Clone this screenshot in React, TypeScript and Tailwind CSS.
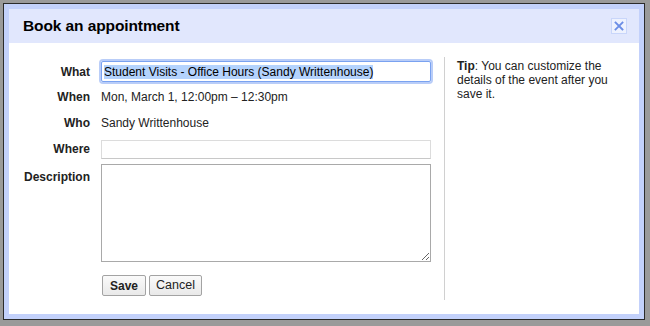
import { useEffect, useRef } from 'react';

const CloseIcon = () => (
  <svg width="10" height="10" viewBox="0 0 10 10">
    <path d="M1.5 1.5 L8.5 8.5 M8.5 1.5 L1.5 8.5" stroke="#6b8de6" strokeWidth="1.8" strokeLinecap="square" />
  </svg>
);

const Label = ({ children, top }: { children: string; top?: boolean }) => (
  <div className={`w-[81px] shrink-0 text-right text-[12px] font-bold text-[#222] ${top ? 'self-start pt-[4px]' : ''}`}>
    {children}
  </div>
);

export default function App() {
  const whatRef = useRef<HTMLInputElement>(null);

  useEffect(() => {
    // the title field opens focused with its text selected
    whatRef.current?.focus();
    whatRef.current?.select();
  }, []);

  return (
    <div
      className="w-[650px] h-[326px] bg-[#9a9a9a] pt-[3px] pl-[3px] pr-[5px] pb-[6px]"
      style={{ fontFamily: '"Liberation Sans", Arial, sans-serif' }}
    >
      <div className="h-full border border-[#2b2b2b] bg-[#c3d1fb] p-[5px]">
        <div className="h-full flex flex-col bg-white">
          {/* Header */}
          <div className="h-[34px] shrink-0 bg-[#e1e7fd] flex items-center justify-between pl-[14px] pr-[12px]">
            <h1 className="text-[15.5px] font-bold text-black tracking-[-0.1px]">Book an appointment</h1>
            <button className="w-[16px] h-[16px] border border-[#c9d6fa] bg-[#eef2fe] flex items-center justify-center">
              <CloseIcon />
            </button>
          </div>

          {/* Body */}
          <div className="flex-1 flex py-[14px]">
            <div className="w-[422px] shrink-0 flex flex-col pt-[2px] text-[12px] text-[#222]">
              <div className="h-[25px] flex items-center gap-[11px]">
                <Label>What</Label>
                <input
                  ref={whatRef}
                  defaultValue="Student Visits - Office Hours (Sandy Writtenhouse)"
                  className="w-[330px] h-[21px] border border-[#7aa2f0] rounded-[2px] px-[2px] text-[12px] text-black outline-none shadow-[0_0_0_2px_#b9cdf8] selection:bg-[#b4d3fd]"
                />
              </div>
              <div className="h-[26px] flex items-center gap-[11px]">
                <Label>When</Label>
                <span>Mon, March 1, 12:00pm – 12:30pm</span>
              </div>
              <div className="h-[26px] flex items-center gap-[11px]">
                <Label>Who</Label>
                <span>Sandy Writtenhouse</span>
              </div>
              <div className="h-[26px] flex items-center gap-[11px]">
                <Label>Where</Label>
                <input className="w-[330px] h-[19px] border border-[#dcdcdc] border-b-[#c8c8c8] outline-none px-[2px] text-[12px]" />
              </div>
              <div className="flex items-start gap-[11px] mt-[2px]">
                <Label top>Description</Label>
                <textarea className="w-[330px] h-[98px] border border-[#a9a9a9] outline-none p-[2px] text-[12px] resize" />
              </div>
              <div className="flex gap-[3px] mt-[13px] ml-[93px]">
                <button className="h-[21px] w-[44px] rounded-[2px] border border-[#a3a3a3] bg-gradient-to-b from-[#fafafa] to-[#e9e9e9] text-[12px] font-bold text-[#222]">
                  Save
                </button>
                <button className="h-[21px] w-[53px] rounded-[2px] border border-[#a3a3a3] bg-gradient-to-b from-[#fafafa] to-[#e9e9e9] text-[12.5px] text-[#222]">
                  Cancel
                </button>
              </div>
            </div>

            {/* Tip */}
            <div className="border-l border-[#d0d0d0] ml-[13px] pl-[12px] pt-[2px] w-[172px]">
              <p className="text-[12px] leading-[14px] text-[#222]">
                <b>Tip</b>: You can customize the details of the event after you save it.
              </p>
            </div>
          </div>
        </div>
      </div>
    </div>
  );
}
